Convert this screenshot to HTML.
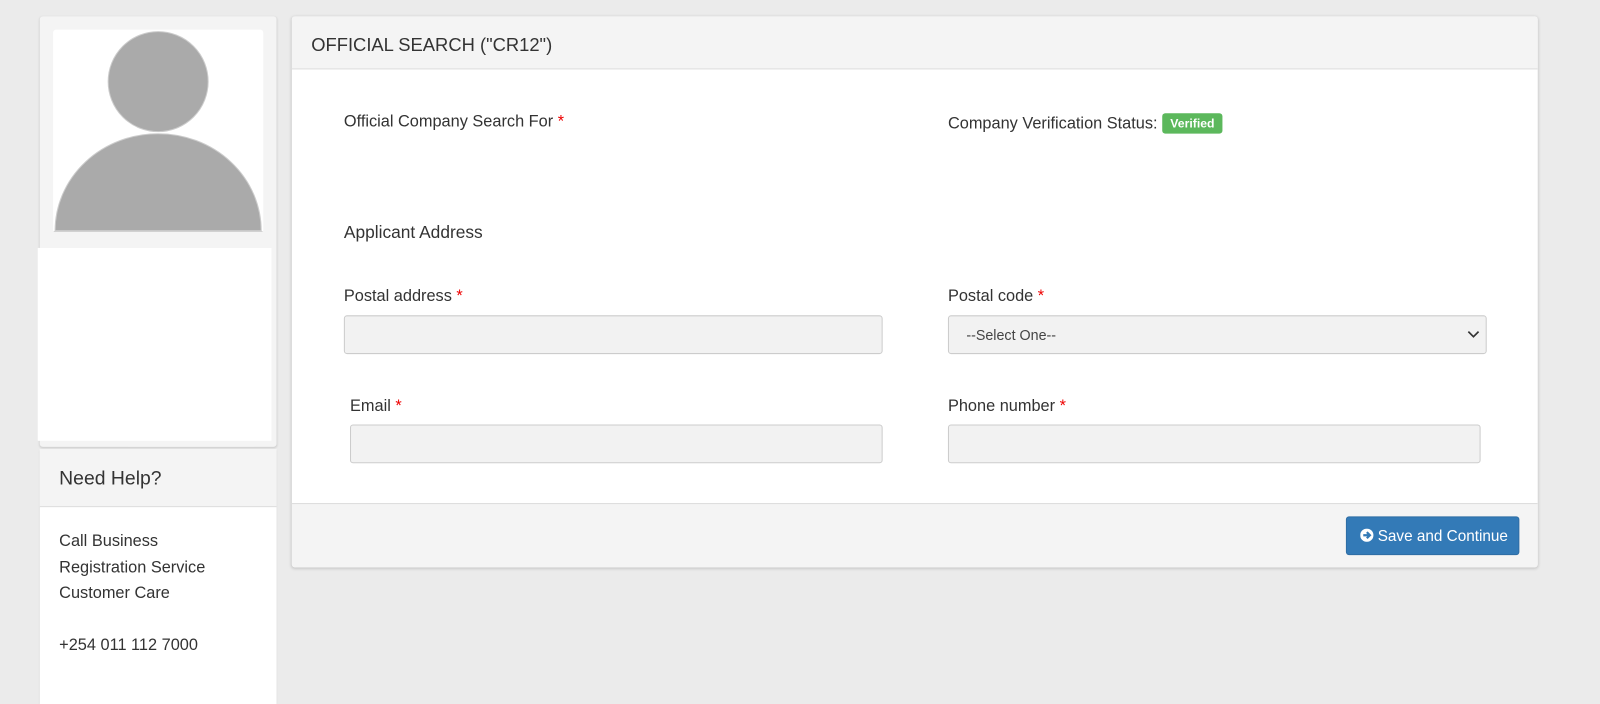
<!DOCTYPE html>
<html><head><style>
*{box-sizing:border-box;margin:0;padding:0}
body{width:1600px;height:679px;background:#ebebeb;font-family:"Liberation Sans",Arial,sans-serif;color:#333;position:relative;overflow:hidden}
#w{position:absolute;left:0;top:0;width:1568px;height:665px;transform:scale(1.0204);transform-origin:0 0}
.abs{position:absolute}
.req{color:#e00}
.lbl{position:absolute;font-size:16px;color:#333}
.inp{position:absolute;height:38px;background:#f2f2f2;border:1px solid #ccc;border-radius:3px}
</style></head><body><div id="w">
<div class="abs" style="left:39px;top:16px;width:232px;height:422px;background:#f4f4f4;border-radius:3px;box-shadow:0 1px 2px rgba(0,0,0,.15)"></div>
<div class="abs" style="left:52px;top:29px;width:206px;height:199px;background:#fff;border-radius:3px;overflow:hidden">
<svg width="206" height="199"><circle cx="103" cy="51" r="49" fill="#aaa" stroke="#ccc"/><path d="M2 197 A101 95 0 0 1 204 197 Z" fill="#aaa" stroke="#ccc"/><line x1="0" y1="198" x2="206" y2="198" stroke="#ccc"/></svg></div>
<div class="abs" style="left:37px;top:243px;width:229px;height:189px;background:#fff"></div>
<div class="abs" style="left:39px;top:440px;width:232px;height:250px;background:#fff;box-shadow:0 1px 2px rgba(0,0,0,.15)">
<div style="height:57px;background:#f4f4f4;border-bottom:1px solid #ddd;padding:19px 0 0 19px;font-size:19px">Need Help?</div>
<div style="padding:21px 0 0 19px;font-size:16px;line-height:25.5px">Call Business<br>Registration Service<br>Customer Care<br><br>+254 011 112 7000</div>
</div>
<div class="abs" style="left:286px;top:16px;width:1221px;height:540px;background:#fff;border-radius:3px;box-shadow:0 1px 3px rgba(0,0,0,.2);overflow:hidden">
<div style="height:52px;background:#f4f4f4;border-bottom:1px solid #ddd;padding:18px 0 0 19px;font-size:18px">OFFICIAL SEARCH ("CR12")</div>
<div class="abs" style="left:0;top:477px;width:1221px;height:63px;background:#f4f4f4;border-top:1px solid #ddd"></div>
<div class="abs" style="left:1033px;top:490px;width:170px;height:38px;background:#337ab7;border:1px solid #2e6da4;border-radius:3px;color:#fff;font-size:15px;padding:10px 0 0 13px"><svg width="13" height="13" style="vertical-align:-1px"><circle cx="6.5" cy="6.5" r="6.5" fill="#fff"/><path d="M3 6.5H9M6.5 3.5L9.5 6.5L6.5 9.5" stroke="#337ab7" stroke-width="2.2" fill="none"/></svg> Save and Continue</div>
</div>
<div class="lbl" style="left:337px;top:111px">Official Company Search For <span class="req">*</span></div>
<div class="lbl" style="left:929px;top:111px">Company Verification Status: <span style="display:inline-block;background:#5cb85c;color:#fff;font-weight:bold;font-size:12px;padding:3px 8px;border-radius:3px;vertical-align:1px">Verified</span></div>
<div class="lbl" style="left:337px;top:218px;font-size:17px">Applicant Address</div>
<div class="lbl" style="left:337px;top:282px">Postal address <span class="req">*</span></div>
<div class="inp" style="left:337px;top:309px;width:528px"></div>
<div class="lbl" style="left:929px;top:282px">Postal code <span class="req">*</span></div>
<div class="inp" style="left:929px;top:309px;width:528px;font-size:14px;padding:10px 0 0 17px;color:#444">--Select One--<svg class="abs" style="right:6px;top:13px" width="12" height="9"><path d="M1 2L6 7L11 2" stroke="#333" stroke-width="1.6" fill="none"/></svg></div>
<div class="lbl" style="left:343px;top:390px">Email <span class="req">*</span></div>
<div class="inp" style="left:343px;top:416px;width:522px"></div>
<div class="lbl" style="left:929px;top:390px">Phone number <span class="req">*</span></div>
<div class="inp" style="left:929px;top:416px;width:522px"></div>
</div></body></html>
